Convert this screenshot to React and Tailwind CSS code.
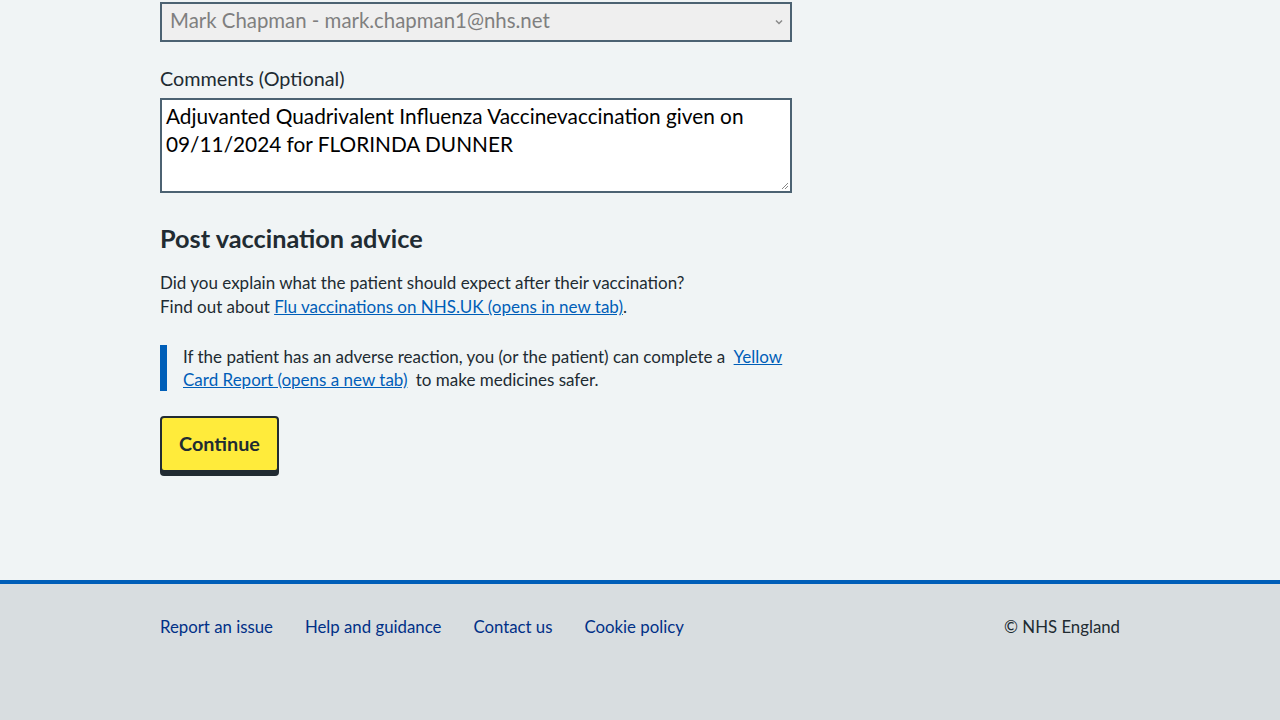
import React from "react";

const App = () => {
  return (
    <div className="min-h-screen bg-[#f0f4f5] flex flex-col text-[#212b32] font-['Lato','Liberation_Sans',sans-serif]">
      {/* Form */}
      <main className="w-[960px] mx-auto pt-[2px] pb-[108px]">
        <div className="w-[632px]">
          <div className="h-[40px] border-2 border-[#4c6272] bg-[#efefef] flex items-center justify-between pl-[8px] pr-[6px]">
            <span className="text-[20.4px] leading-[28px] text-[#7f7f7f] -mt-[4px]">Mark Chapman - mark.chapman1@nhs.net</span>
            <svg width="10" height="10" viewBox="0 0 10 10" className="text-[#8a8a8a]">
              <path d="M2 3.5 L5 6.5 L8 3.5" fill="none" stroke="currentColor" strokeWidth="1.5" />
            </svg>
          </div>

          <label className="block mt-[22px] mb-[6px] text-[19.8px] leading-[28px]">Comments (Optional)</label>
          <div className="relative h-[95px] border-2 border-[#4c6272] bg-white px-[4px] py-[2px] text-[20.8px] leading-[28px] text-black">
            Adjuvanted Quadrivalent Influenza Vaccinevaccination given on 09/11/2024 for FLORINDA DUNNER
            <svg width="8" height="8" viewBox="0 0 8 8" className="absolute right-[1px] bottom-[1px] text-[#888]">
              <path d="M7 1 L1 7 M7 4 L4 7" stroke="currentColor" strokeWidth="1" />
            </svg>
          </div>

          <h2 className="mt-[29px] text-[25.3px] leading-[32px] font-bold">Post vaccination advice</h2>
          <p className="mt-[17px] text-[17px] leading-[24px]">
            Did you explain what the patient should expect after their vaccination?
            <br />
            Find out about{" "}
            <a href="#" className="text-[#005eb8] underline">Flu vaccinations on NHS.UK (opens in new tab)</a>.
          </p>

          <div className="mt-[26px] border-l-[7px] border-[#005eb8] pl-[16px] text-[17px] leading-[23px]">
            If the patient has an adverse reaction, you (or the patient) can complete a{" "}
            <a href="#" className="text-[#005eb8] underline ml-[4px]">Yellow Card Report (opens a new tab)</a>
            <span className="ml-[4px]"> to make medicines safer.</span>
          </div>

          <button className="mt-[25px] h-[56px] px-[17px] bg-[#ffeb3b] border-2 border-[#212b32] rounded-[4px] shadow-[0_4px_0_#212b32] text-[19.8px] font-bold text-[#212b32]">
            Continue
          </button>
        </div>
      </main>

      {/* Footer */}
      <footer className="flex-1 bg-[#d8dde0] border-t-4 border-[#005eb8]">
        <div className="w-[960px] mx-auto pt-[31px] flex justify-between text-[16.8px] leading-[24px]">
          <ul className="flex gap-[32px] text-[#003087]">
            <li><a href="#">Report an issue</a></li>
            <li><a href="#">Help and guidance</a></li>
            <li><a href="#">Contact us</a></li>
            <li><a href="#">Cookie policy</a></li>
          </ul>
          <p className="text-[#212b32]">© NHS England</p>
        </div>
      </footer>
    </div>
  );
};

export default App;
